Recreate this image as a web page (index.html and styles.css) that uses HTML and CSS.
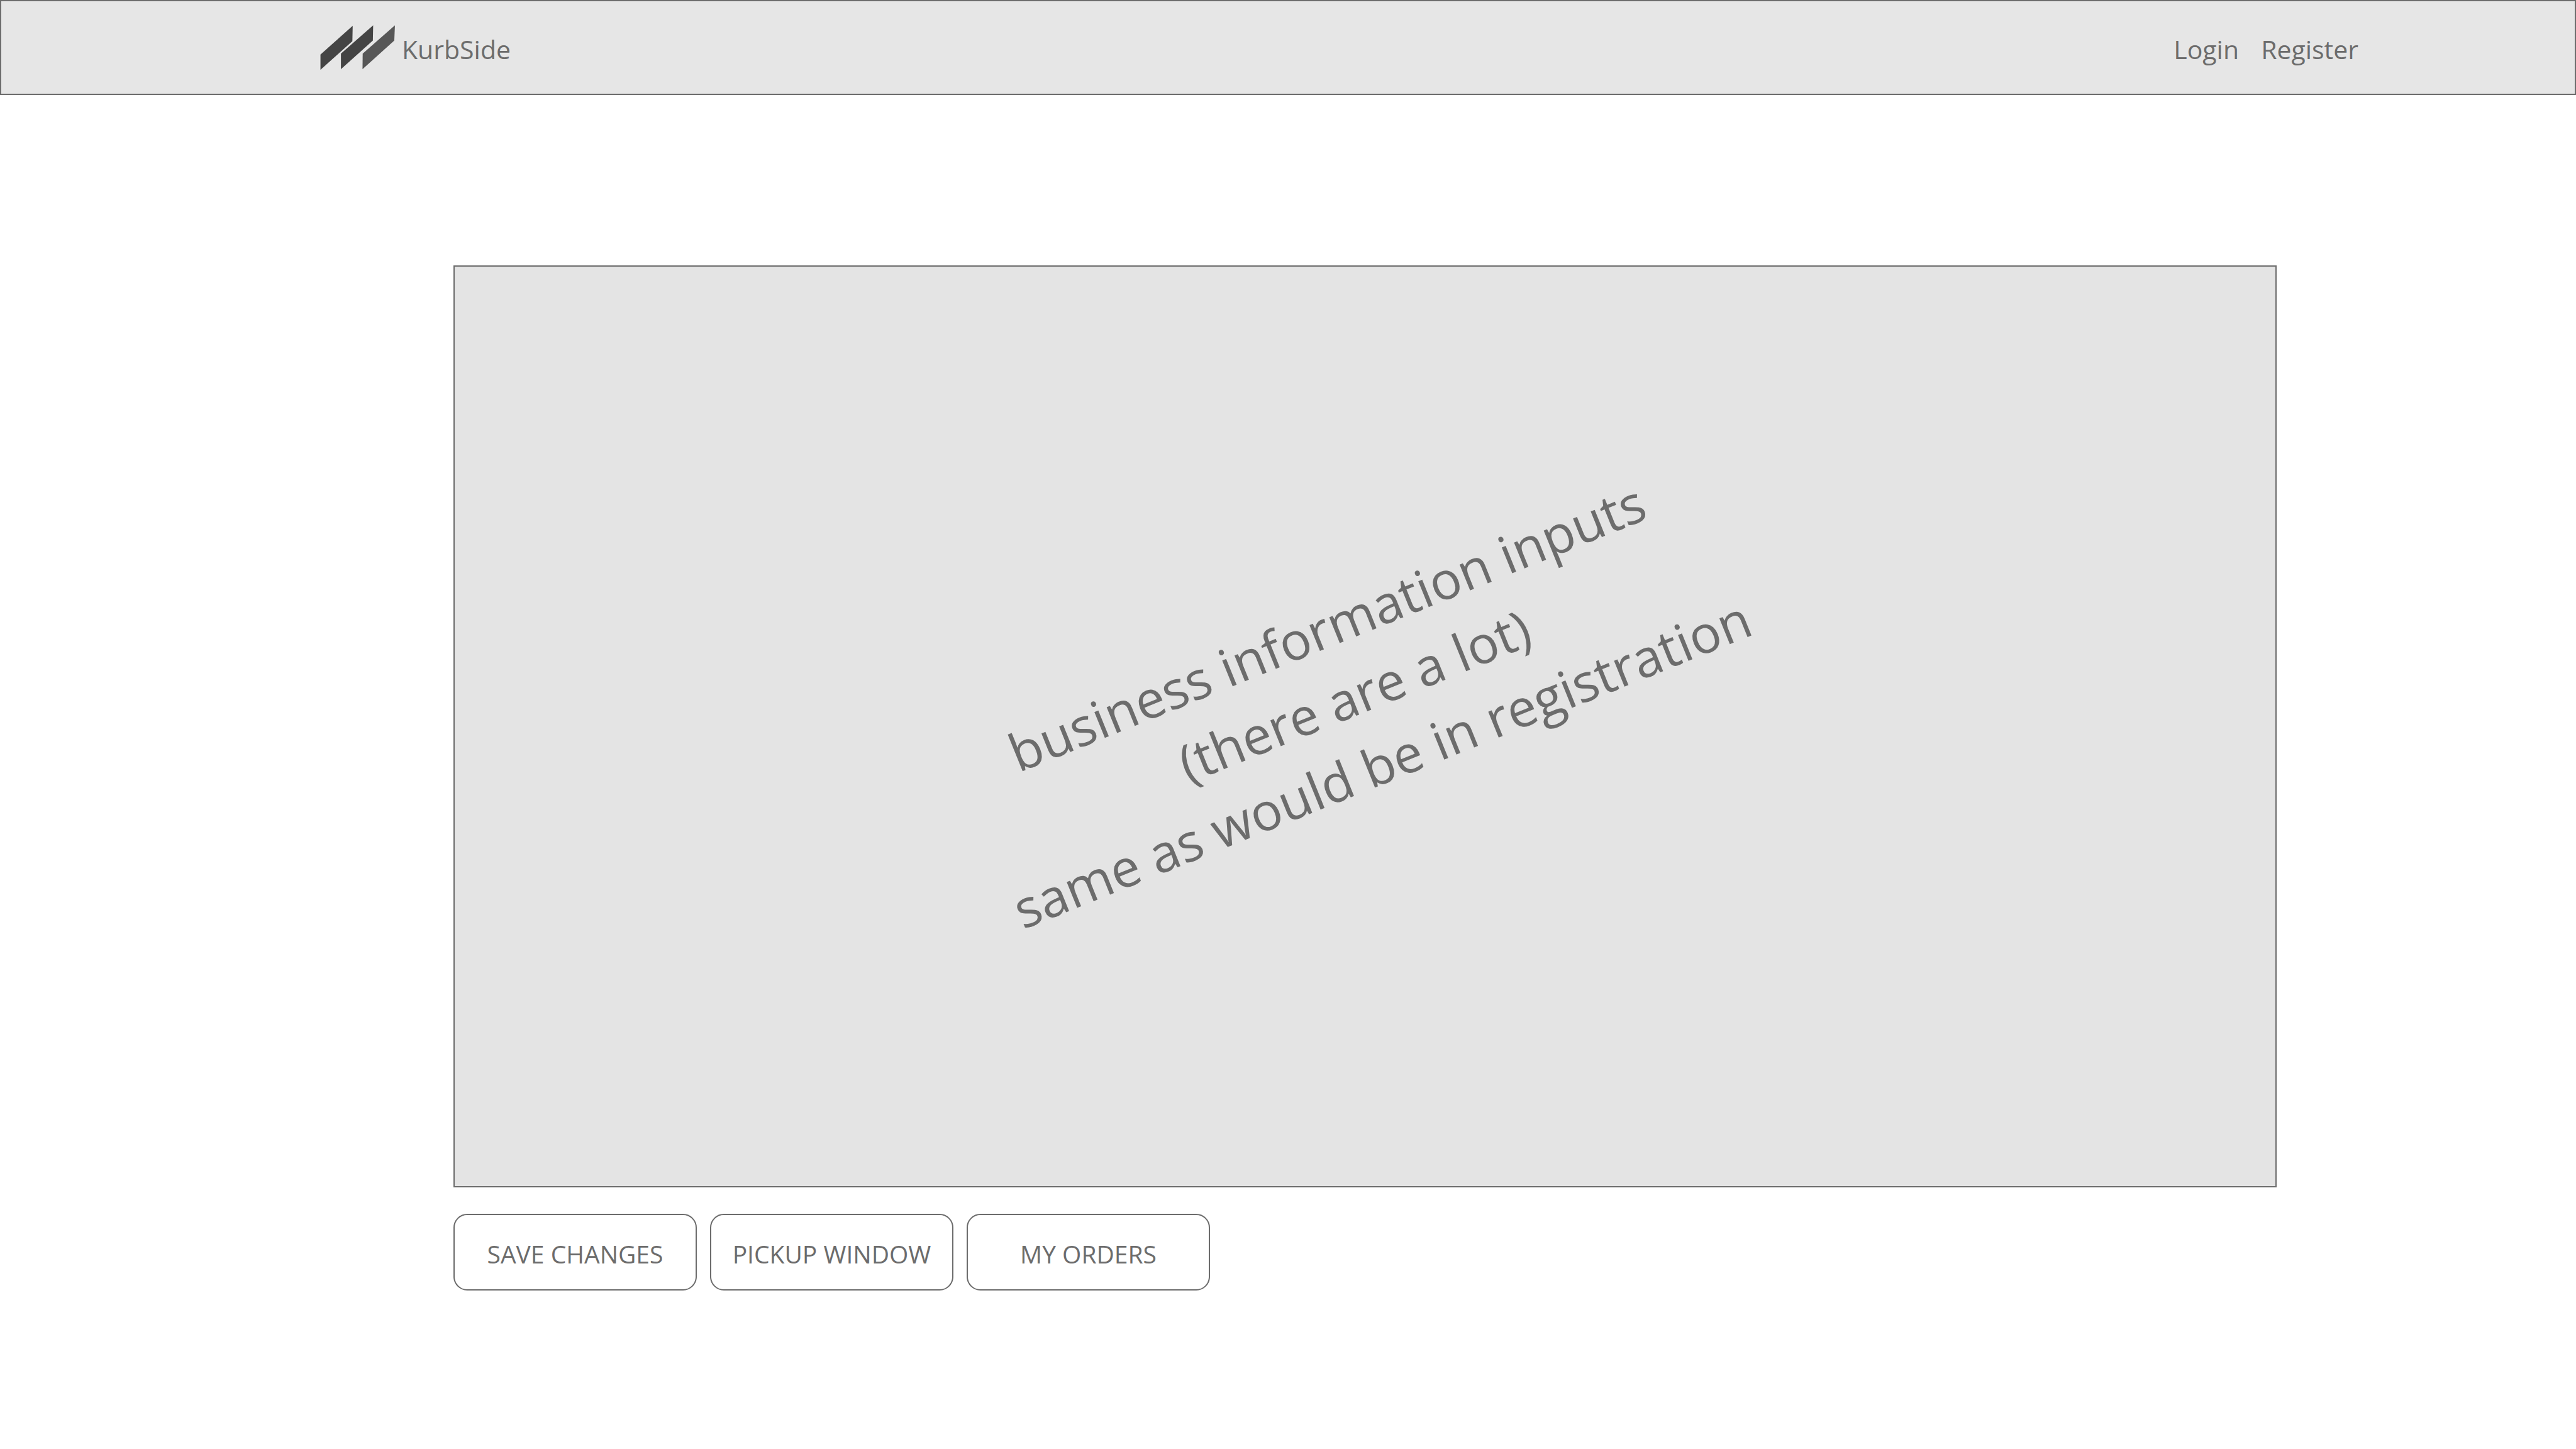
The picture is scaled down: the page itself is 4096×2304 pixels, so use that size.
FILE: index.html
```
<!DOCTYPE html>
<html lang="en">
<head>
  <meta charset="utf-8">
  <title>KurbSide</title>
  <link rel="stylesheet" href="styles.css">
</head>
<body>
  <header class="topbar">
    <a class="brand" href="#">
      <svg class="brand-mark" viewBox="0 0 464 277" aria-hidden="true">
        <path fill="#444" d="M2 182 202 4 200 99 2 277z"/>
        <path fill="#444" d="M129 177 329 1 327 96 129 273z"/>
        <path fill="#575757" d="M264 177 464 1 460 96 263 273z"/>
      </svg>
      <span>KurbSide</span>
    </a>
    <nav class="account">
      <a href="#">Login</a>
      <a href="#">Register</a>
    </nav>
  </header>
  <main class="page">
    <section class="panel">
      <p class="note">business information inputs<br>(there are a lot)<br>same as would be in registration</p>
    </section>
    <div class="actions">
      <button class="action" type="button">SAVE CHANGES</button>
      <button class="action" type="button">PICKUP WINDOW</button>
      <button class="action" type="button">MY ORDERS</button>
    </div>
  </main>
</body>
</html>
```
FILE: styles.css
```
* {
  box-sizing: border-box;
}

body {
  margin: 0;
  background: #fff;
  color: #6c6c6c;
  font-family: "Open Sans", "Noto Sans", sans-serif;
  font-size: 41px;
  line-height: 56px;
}

a {
  color: inherit;
  text-decoration: none;
}

.topbar {
  display: flex;
  align-items: center;
  justify-content: space-between;
  min-height: 151px;
  padding: 0 344px 0 507px;
  background: #e6e6e6;
  border: 2px solid #6c6c6c;
}

.brand {
  display: flex;
  align-items: center;
  gap: 11px;
}

.brand-mark {
  width: 119px;
  height: 71px;
}

.brand span,
.account {
  padding-top: 4px;
}

.account {
  display: flex;
  gap: 35px;
}

.page {
  padding: 271px 476px 252px 721px;
}

.panel {
  display: flex;
  align-items: center;
  justify-content: center;
  min-height: 1466px;
  padding: 0 36px 102px 0;
  background: #e4e4e4;
  border: 2px solid #6c6c6c;
}

.note {
  margin: 0;
  font-size: 83px;
  line-height: 117px;
  text-align: center;
  transform: rotate(-22deg);
}

.actions {
  display: flex;
  gap: 21px;
  margin-top: 42px;
}

.action {
  width: 387px;
  height: 122px;
  padding: 6px 0 0;
  background: #fff;
  border: 2px solid #6c6c6c;
  border-radius: 22px;
  color: inherit;
  font: inherit;
  font-size: 39px;
}
```
